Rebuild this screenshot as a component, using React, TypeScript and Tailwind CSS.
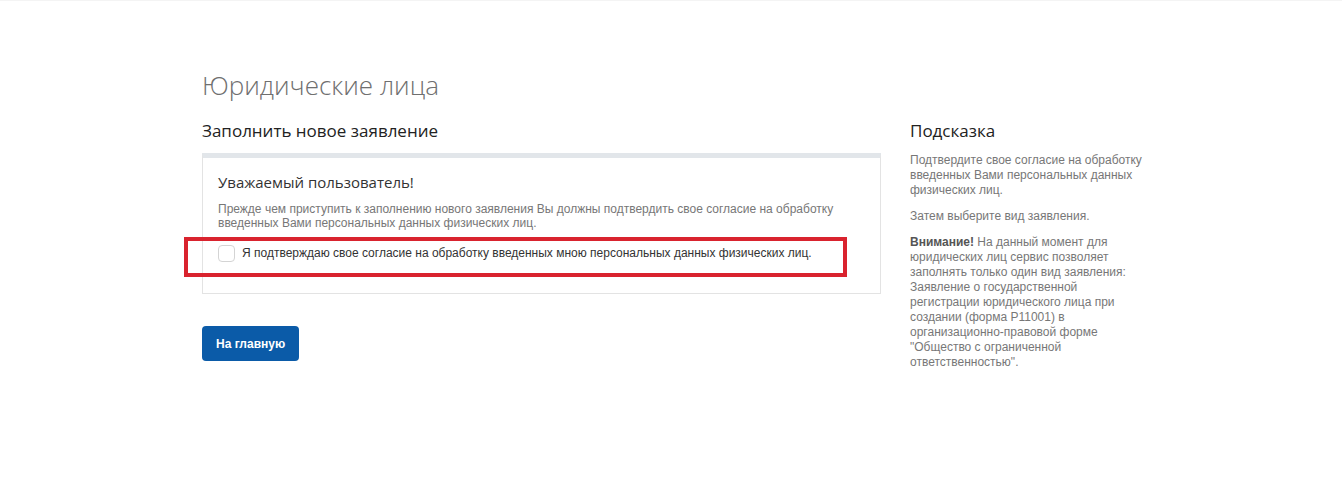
import React from 'react'

// Hint column paragraphs
const Hint = () => (
  <div className="w-[236px] shrink-0 pt-[52px]">
    <h3 className="text-[17px] leading-[24px] text-[#222] font-['Open_Sans',sans-serif]">Подсказка</h3>
    <div className="mt-[10px] text-[12px] leading-[15px] text-[#777] font-['Liberation_Sans',Arial,sans-serif] flex flex-col gap-[11px]">
      <p>Подтвердите свое согласие на обработку введенных Вами персональных данных физических лиц.</p>
      <p>Затем выберите вид заявления.</p>
      <p>
        <b className="text-[#555]">Внимание!</b> На данный момент для юридических лиц сервис позволяет заполнять только
        один вид заявления: Заявление о государственной регистрации юридического лица при создании (форма Р11001) в
        организационно-правовой форме "Общество с ограниченной ответственностью".
      </p>
    </div>
  </div>
)

export default function App() {
  return (
    <div className="min-h-[493px] bg-white border-t border-[#f4f4f4]">
      <div className="mx-auto w-[938px] flex gap-[29px] pt-[66px]">
        <div className="w-[679px] shrink-0">
          <h1 className="text-[26px] leading-[36px] font-light text-[#6f6f6f] font-['Open_Sans',sans-serif]">
            Юридические лица
          </h1>
          <h2 className="mt-[16px] text-[17px] leading-[24px] text-[#222] font-['Open_Sans',sans-serif]">
            Заполнить новое заявление
          </h2>

          <div className="relative mt-[10px] h-[141px] border border-[#e3e3e3] border-t-[5px] border-t-[#e2e6ea] px-[15px] pt-[12px]">
            <h3 className="text-[15px] leading-[24px] text-[#333] font-['Open_Sans',sans-serif]">Уважаемый пользователь!</h3>
            <p className="mt-[8px] text-[12px] leading-[14px] text-[#777] font-['Liberation_Sans',Arial,sans-serif]">
              Прежде чем приступить к заполнению нового заявления Вы должны подтвердить свое согласие на обработку
              введенных Вами персональных данных физических лиц.
            </p>
            <label className="mt-[15px] flex items-center gap-[7px] text-[12px] leading-[17px] text-[#333] font-['Liberation_Sans',Arial,sans-serif]">
              <span className="w-[17px] h-[17px] rounded-[4px] border border-[#d4d4d4] bg-white shrink-0" />
              Я подтверждаю свое согласие на обработку введенных мною персональных данных физических лиц.
            </label>

            {/* red highlight frame drawn over the card */}
            <div className="absolute left-[-19px] top-[79px] w-[663px] h-[40px] border-[4px] border-[#d9232e]" />
          </div>

          <button className="mt-[32px] h-[35px] px-[14px] rounded-[4px] bg-[#0b5ba8] text-white text-[12px] font-bold font-['Liberation_Sans',Arial,sans-serif]">
            На главную
          </button>
        </div>

        <Hint />
      </div>
    </div>
  )
}
